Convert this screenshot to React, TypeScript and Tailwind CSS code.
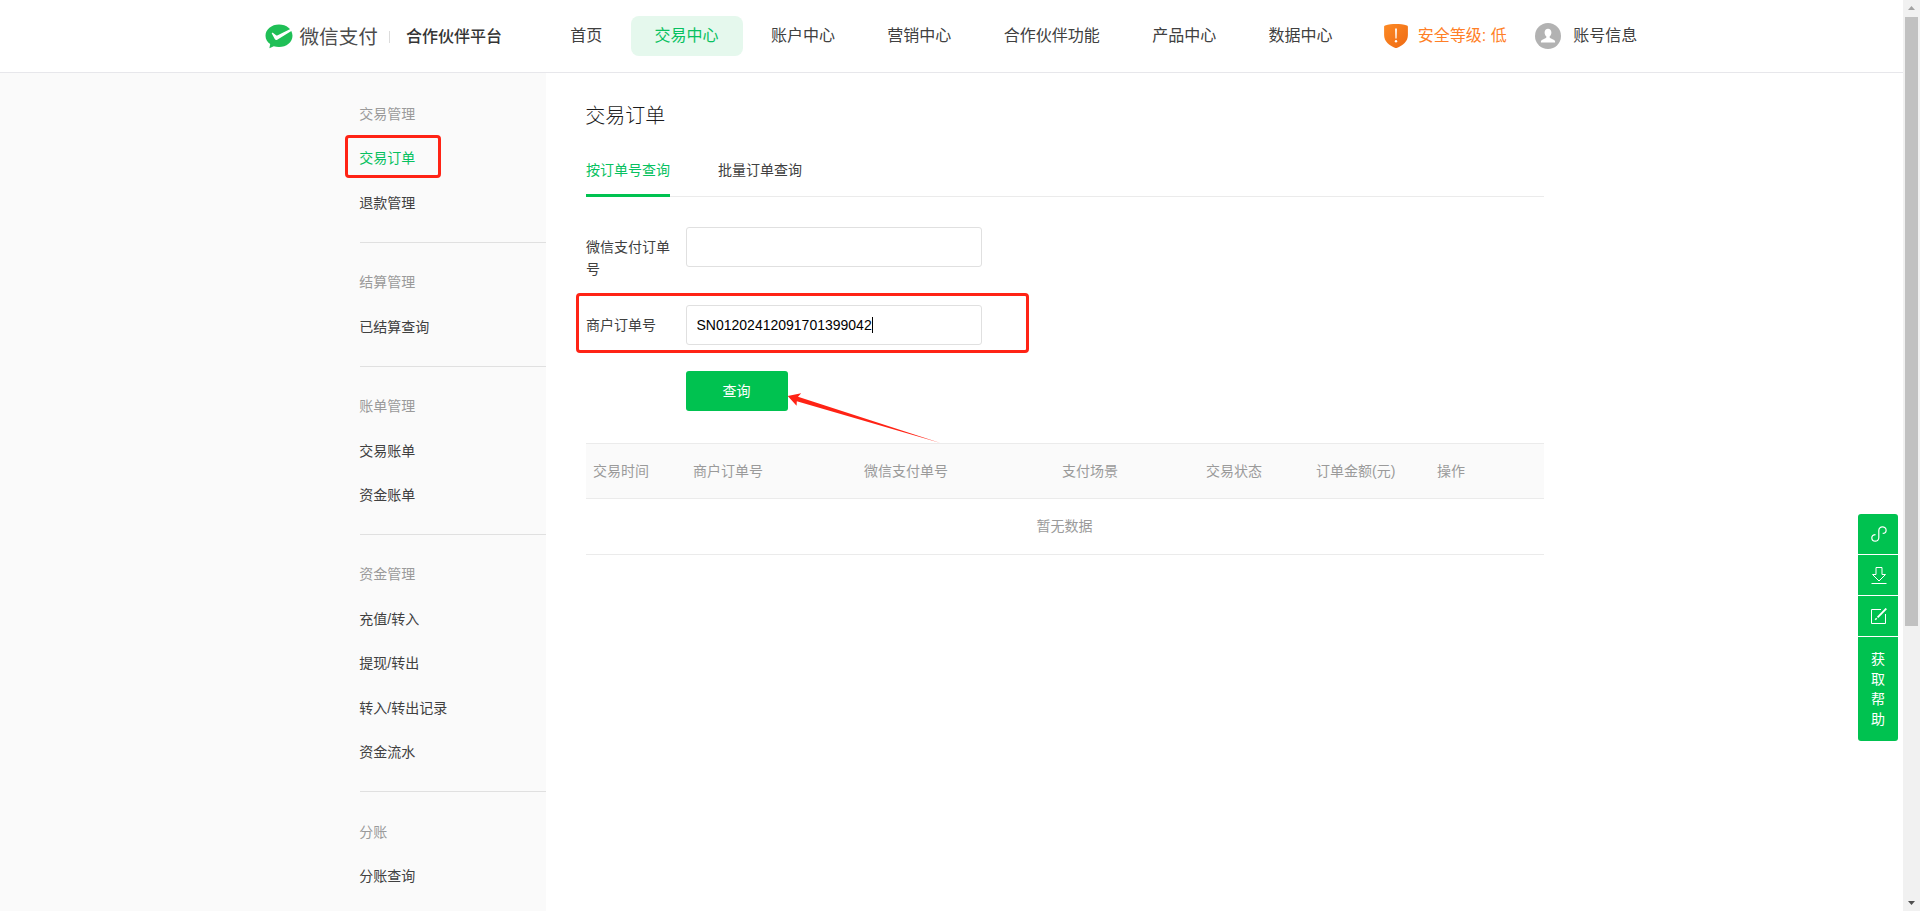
import { useState } from "react";
import type { ReactNode } from "react";
import clsx from "clsx";

const NAV_ITEMS = ["首页", "交易中心", "账户中心", "营销中心", "合作伙伴功能", "产品中心", "数据中心"];

const MENU_GROUPS = [
  { title: "交易管理", items: ["交易订单", "退款管理"] },
  { title: "结算管理", items: ["已结算查询"] },
  { title: "账单管理", items: ["交易账单", "资金账单"] },
  { title: "资金管理", items: ["充值/转入", "提现/转出", "转入/转出记录", "资金流水"] },
  { title: "分账", items: ["分账查询"] },
];

const TABS = ["按订单号查询", "批量订单查询"];

const COLUMNS = [
  { label: "交易时间", width: "w-[100px]" },
  { label: "商户订单号", width: "w-[171px]" },
  { label: "微信支付单号", width: "w-[198px]" },
  { label: "支付场景", width: "w-[144px]" },
  { label: "交易状态", width: "w-[110px]" },
  { label: "订单金额(元)", width: "w-[121px]" },
  { label: "操作", width: "w-[100px]" },
];

function Logo() {
  return (
    <div className="flex items-center">
      <svg width="28" height="25" viewBox="0 0 28 25" className="-mt-px">
        <path
          d="M14 .5C6.500.5.500 5.400.500 11.700c0 3.500 1.900 6.400 4.700 8.400l-.8 4.200 4.400-2c1.600.5 3.300.7 5.200.7 7.500 0 13.500-4.900 13.500-11.300S21.500.5 14 .5Z"
          fill="#1fbf56"
        />
        <path
          d="M6.800 9.600c-.3-.8.5-1.200 1-.8l3.300 2.500c.3.200.7.200 1.100.1L26.300 4.600l.9 1.800-15 9.300c-.9.500-1.800.3-2.300-.5Z"
          fill="#fff"
        />
      </svg>
      <span className="ml-[7px] text-[19.6px] leading-7 text-[#4c4c4c]">微信支付</span>
      <span className="ml-[11.5px] h-3 w-px bg-[#dcdcdc]" />
      <span className="ml-[15.5px] text-[16px] leading-7 font-medium text-[#353535]">合作伙伴平台</span>
    </div>
  );
}

function Header() {
  return (
    <header className="flex h-[73px] items-start border-b border-[#e7e7eb] pl-[264.5px]">
      <div className="flex h-[73px] w-[282px] items-center">
        <Logo />
      </div>
      <nav className="ml-[0.5px] flex gap-[4.4px] pt-4">
        {NAV_ITEMS.map((item, index) => (
          <a
            key={item}
            className={clsx(
              "flex h-10 items-center rounded-lg pr-[24.8px] pl-[23.2px] text-base whitespace-nowrap",
              index === 1 ? "bg-[#e5f8ed] text-[#07c160]" : "text-[#404040]",
            )}
          >
            {item}
          </a>
        ))}
      </nav>
      <div className="mt-[15px] ml-[27px] flex h-10 items-center pt-px text-base text-[#ff7f27]">
        <svg width="24" height="24" viewBox="0 0 24 24">
          <defs>
            <linearGradient id="shield" x1="0" y1="0" x2="1" y2="1">
              <stop offset="0" stopColor="#fd8a24" />
              <stop offset="1" stopColor="#ee6a14" />
            </linearGradient>
          </defs>
          <path
            d="M12 0c3.600 0 7.500.4 11 1.500.6.2.9.6.9 1.200V11c0 6.500-5 10.600-11.200 12.900-.4.1-.9.1-1.300 0C5.100 21.600.1 17.500.1 11V2.700c0-.6.300-1 .9-1.200C4.500.4 8.400 0 12 0Z"
            fill="url(#shield)"
          />
          <path d="M11.100 4.500h1.800l-.3 10h-1.200Z" fill="#fff" />
          <circle cx="12" cy="17.200" r="1.200" fill="#fff" />
        </svg>
        <span className="ml-[9.500px] whitespace-nowrap">安全等级: 低</span>
      </div>
      <div className="mt-4 ml-[28.5px] flex h-10 items-center text-base text-[#404040]">
        <svg width="26" height="26" viewBox="0 0 26 26">
          <circle cx="13" cy="13" r="13" fill="#b2b2b2" />
          <path
            d="M13 5.800c2 0 3.400 1.500 3.400 3.600 0 1.700-.8 3.100-1.600 3.900-.4.500-.3 1.300.3 1.600l4 2c.7.400 1 .8 1 1.500v1.200H5.900v-1.200c0-.7.300-1.100 1-1.500l4-2c.6-.3.700-1.100.3-1.600-.8-.8-1.600-2.200-1.600-3.900 0-2.100 1.400-3.600 3.400-3.600Z"
            fill="#fff"
          />
        </svg>
        <span className="ml-3 whitespace-nowrap">账号信息</span>
      </div>
    </header>
  );
}

function Sidebar() {
  return (
    <aside className="w-[546px] shrink-0 bg-[#fafafa] pt-[1.6px] pl-[360px] -indent-[0.7px]">
      {MENU_GROUPS.map((group) => (
        <div
          key={group.title}
          className="border-b border-[#e0e0e0] pt-[17px] pb-[17.2px] last:border-b-0"
        >
          <div className="flex h-[44.4px] items-center text-[#9a9a9a]">{group.title}</div>
          {group.items.map((item) => (
            <div
              key={item}
              className={clsx(
                "relative flex h-[44.4px] items-center",
                item === "交易订单" ? "text-[#07c160]" : "text-[#404040]",
              )}
            >
              {item}
              {item === "交易订单" && (
                <span className="absolute -top-[0.5px] -left-[15.5px] h-[43px] w-[96px] rounded-[4px] border-[3px] border-[#ff2315]" />
              )}
            </div>
          ))}
        </div>
      ))}
    </aside>
  );
}

function Field({ label, children }: { label: string; children: ReactNode }) {
  return (
    <div className="flex h-10">
      <label className="mt-[9px] w-[84px] shrink-0 leading-[22px] text-[#404040]">{label}</label>
      <div className="ml-4">{children}</div>
    </div>
  );
}

function Arrow() {
  return (
    <svg width="156" height="52" viewBox="0 0 156 52" className="absolute top-5 left-[101px]">
      <path d="M.7 5 14.200 2.200 11 5.800 153.500 52 9.800 10.200 9.600 14.800Z" fill="#ff2315" />
    </svg>
  );
}

function OrderSearch() {
  const [orderNo, setOrderNo] = useState("");
  const [merchantNo, setMerchantNo] = useState("SN01202412091701399042");
  const inputClass =
    "h-10 w-[296px] rounded-[3px] border border-[#e0e0e0] px-[9.5px] text-sm text-black outline-none";

  return (
    <div className="pt-[30px]">
      <Field label="微信支付订单号">
        <input className={inputClass} value={orderNo} onChange={(e) => setOrderNo(e.target.value)} />
      </Field>
      <div className="relative mt-[38px]">
        <Field label="商户订单号">
          <input
            className={inputClass}
            value={merchantNo}
            onChange={(e) => setMerchantNo(e.target.value)}
          />
        </Field>
        <span className="absolute top-3 left-[286px] h-4 w-px bg-black" />
        <span className="pointer-events-none absolute -top-3 -left-[10.5px] h-[60px] w-[453px] rounded-[4px] border-[3px] border-[#ff2315]" />
      </div>
      <div className="relative mt-[26px] ml-[100px] w-[102px]">
        <button
          type="button"
          className="h-10 w-[102px] rounded-[3px] bg-[#00c250] pr-px text-white"
        >
          查询
        </button>
        <Arrow />
      </div>
    </div>
  );
}

function OrderTable() {
  return (
    <div className="mt-8 text-[#9a9a9a]">
      <div className="flex h-14 items-center border-y border-[#ebebeb] bg-[#fafafa] pl-[7px]">
        {COLUMNS.map((column) => (
          <div key={column.label} className={clsx("shrink-0 whitespace-nowrap", column.width)}>
            {column.label}
          </div>
        ))}
      </div>
      <div className="flex h-14 items-center justify-center border-b border-[#ebebeb] pr-px pb-0.5">
        暂无数据
      </div>
    </div>
  );
}

function HelpBar() {
  return (
    <div className="absolute top-[514px] right-[22px] flex w-10 flex-col gap-px overflow-hidden rounded-[3px] bg-white text-white">
      <div className="flex h-10 items-center justify-center bg-[#00c250] pl-px">
        <svg width="16" height="16" viewBox="0 0 16 16" fill="none" stroke="#fff" strokeWidth="1.200">
          <path d="M4.500 8.600C2.300 8.600.8 10 .8 11.800c0 1.900 1.500 3.400 3.400 3.400s3.600-1.500 3.600-3.400V4.400C7.800 2.400 9.400.8 11.400.8s3.700 1.500 3.700 3.400c0 1.800-1.400 3.200-3.400 3.200" />
        </svg>
      </div>
      <div className="flex h-10 items-center justify-center bg-[#00c250] pt-px pl-px">
        <svg width="16" height="18" viewBox="0 0 16 18" fill="none" stroke="#fff">
          <path d="M5 .5h6v7h3.500L8 14 1.500 7.500H5ZM.5 16.500h15" />
        </svg>
      </div>
      <div className="flex h-10 items-center justify-center bg-[#00c250] pl-px">
        <svg width="16" height="16" viewBox="0 0 16 16" fill="none" stroke="#fff">
          <path d="M10 1.500H.5v14h14V6" />
          <path d="M15.300.500 6.600 9.400" strokeWidth="1.800" />
          <path d="m5.700 10.300-1.500 1.500" strokeWidth="1.600" />
        </svg>
      </div>
      <div className="flex h-[104px] flex-col items-center bg-[#00c250] pt-3 leading-5">
        {"获取帮助".split("").map((char) => (
          <span key={char}>{char}</span>
        ))}
      </div>
    </div>
  );
}

function Scrollbar() {
  return (
    <div className="flex w-[17px] shrink-0 flex-col items-center bg-[#f1f1f1]">
      <svg width="17" height="17" viewBox="0 0 17 17">
        <path d="m5 10 3.500-4 3.500 4Z" fill="#a3a3a3" />
      </svg>
      <div className="h-[609px] w-[13px] bg-[#c1c1c1]" />
      <svg width="17" height="17" viewBox="0 0 17 17" className="mt-auto">
        <path d="m5 7 3.500 4L12 7Z" fill="#505050" />
      </svg>
    </div>
  );
}

export default function App() {
  const [activeTab, setActiveTab] = useState(0);

  return (
    <div className="relative flex h-[911px] w-[1920px] overflow-hidden bg-white font-['Liberation_Sans','Noto_Sans_CJK_SC',sans-serif] text-sm">
      <div className="flex grow flex-col">
        <Header />
        <div className="flex grow">
          <Sidebar />
          <main className="ml-10 w-[958px]">
            <h1 className="pt-7 text-xl leading-[30px] font-light -indent-[0.7px] text-[#1c1c1c]">
              交易订单
            </h1>
            <div className="mt-3 flex h-[54px] gap-12 border-b border-[#ebebeb]">
              {TABS.map((tab, index) => (
                <button
                  key={tab}
                  type="button"
                  onClick={() => setActiveTab(index)}
                  className={clsx(
                    "-mb-px h-[54px] border-b-[3px] pt-0.5",
                    activeTab === index
                      ? "border-[#00c250] text-[#07c160]"
                      : "border-transparent text-[#404040]",
                  )}
                >
                  {tab}
                </button>
              ))}
            </div>
            <OrderSearch />
            <OrderTable />
          </main>
        </div>
      </div>
      <Scrollbar />
      <HelpBar />
    </div>
  );
}
